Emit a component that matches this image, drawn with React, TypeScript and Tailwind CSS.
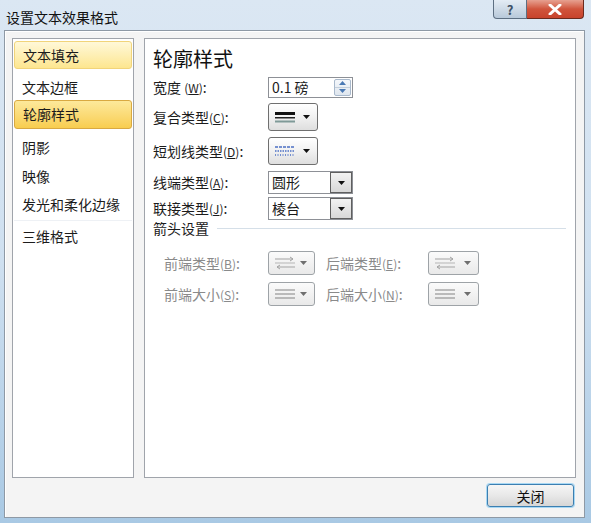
import React from "react";

const font = { fontFamily: '"Noto Sans CJK SC", "Noto Sans", sans-serif' };

function Key({ k }: { k: string }) {
  return (
    <span className="text-[12px]">
      (<span className="underline">{k}</span>)
    </span>
  );
}

function Caret({ dim }: { dim?: boolean }) {
  return (
    <svg width="7" height="4" viewBox="0 0 7 4" className="shrink-0">
      <path d="M0 0 H7 L3.5 4 Z" fill={dim ? "#6f6f6f" : "#111"} />
    </svg>
  );
}

function PicButton({
  children,
  dim,
  w,
}: {
  children: React.ReactNode;
  dim?: boolean;
  w: string;
}) {
  return (
    <div
      className={`${w} flex items-center justify-between pl-[5px] pr-[7px] rounded-[3px] border ${
        dim
          ? "h-[24px] border-[#9ea3a7] bg-gradient-to-b from-[#fbfbfb] to-[#e9e9e9]"
          : "h-[28px] border-[#6f6f6f] bg-gradient-to-b from-[#ffffff] via-[#f1f1f1] to-[#dedede]"
      }`}
    >
      {children}
      <Caret dim={dim} />
    </div>
  );
}

function Combo({ value }: { value: string }) {
  return (
    <div className="w-[85px] h-[23px] flex border border-[#8d9096] bg-white">
      <div className="flex-1 flex items-center pl-[3px] text-[14px] text-[#1a1a1a]">{value}</div>
      <div className="w-[22px] flex items-center justify-center border border-[#5f5f5f] bg-gradient-to-b from-[#f2f2f2] to-[#d8d8d8]">
        <Caret />
      </div>
    </div>
  );
}

const lists = ["文本填充", "文本边框", "轮廓样式", "阴影", "映像", "发光和柔化边缘"];

export default function App() {
  return (
    <div
      className="w-[591px] h-[523px] flex flex-col bg-gradient-to-b from-[#dbe7f3] via-[#cfe0f0] to-[#a9c9e4] text-[#1c1c1c]"
      style={font}
    >
      {/* title bar */}
      <div className="h-[30px] flex justify-between items-start">
        <div className="pl-[6px] pt-[7px] text-[14px] leading-[20px] text-[#111]">设置文本效果格式</div>
        <div className="flex mr-[7px]">
          <div className="w-[34px] h-[19px] flex items-center justify-center rounded-bl-[4px] border border-t-0 border-[#5d6f82] bg-gradient-to-b from-[#e4ecf4] to-[#b8c9da] text-[13px] font-bold text-[#3d5066] leading-none">
            ?
          </div>
          <div className="w-[57px] h-[19px] flex items-center justify-center rounded-br-[4px] border border-t-0 border-l-0 border-[#6b2a1e] bg-gradient-to-b from-[#e6a090] via-[#d0543c] to-[#c8432c]">
            <svg width="14" height="11" viewBox="0 0 14 11">
              <path d="M2 1 L12 10 M12 1 L2 10" stroke="#fff" strokeWidth="3" strokeLinecap="round" />
            </svg>
          </div>
        </div>
      </div>

      {/* client */}
      <div className="ml-[4px] w-[581px] h-[488px] bg-[#f4f4f4] border border-[#8e99a5] shadow-[inset_1px_1px_0_#ffffff] flex flex-col">
        <div className="flex pt-[7px] pl-[7px]">
          {/* left list */}
          <div className="w-[122px] h-[440px] bg-white border border-[#a0a4ab] flex flex-col px-[1px] pt-[2px] text-[14px]">
            <div className="h-[28px] flex items-center pl-[8px] rounded-[3px] border border-[#f1d47a] bg-gradient-to-b from-[#fff8d8] to-[#fde68f]">
              {lists[0]}
            </div>
            <div className="h-[31px] flex items-center pl-[8px] pt-[6px]">{lists[1]}</div>
            <div className="h-[29px] flex items-center pl-[8px] rounded-[3px] border border-[#d9a941] bg-gradient-to-b from-[#fde99a] to-[#f8cd4e]">
              {lists[2]}
            </div>
            <div className="h-[30px] mt-[3px] flex items-center pl-[8px]">{lists[3]}</div>
            <div className="h-[28px] flex items-center pl-[8px]">{lists[4]}</div>
            <div className="h-[28px] flex items-center pl-[8px]">{lists[5]}</div>
            <div className="h-px mt-[2px] bg-[#eef1f5]" />
            <div className="h-[30px] flex items-center pl-[8px]">三维格式</div>
          </div>

          {/* right panel */}
          <div className="ml-[10px] w-[432px] h-[440px] bg-white border border-[#a0a4ab] flex flex-col pl-[8px] text-[14px]">
            <div className="mt-[8px] h-[24px] leading-[24px] text-[20px] text-[#111]">轮廓样式</div>

            <div className="mt-[5px] h-[22px] flex items-center">
              <div className="w-[115px]">
                宽度 <Key k="W" />:
              </div>
              <div className="w-[85px] h-[21px] flex items-center border border-[#8d9096] bg-white">
                <div className="flex-1 pl-[3px] text-[14px] leading-none">0.1 磅</div>
                <div className="w-[17px] h-[17px] mr-[1px] flex flex-col border border-[#a9b9cc] rounded-[2px] bg-gradient-to-b from-[#f4f7fb] to-[#dfe6ee]">
                  <div className="flex-1 flex items-center justify-center border-b border-[#c3cfdc]">
                    <svg width="7" height="4" viewBox="0 0 7 4">
                      <path d="M0 4 H7 L3.5 0 Z" fill="#4a79b4" />
                    </svg>
                  </div>
                  <div className="flex-1 flex items-center justify-center">
                    <svg width="7" height="4" viewBox="0 0 7 4">
                      <path d="M0 0 H7 L3.5 4 Z" fill="#4a79b4" />
                    </svg>
                  </div>
                </div>
              </div>
            </div>

            <div className="mt-[5px] h-[28px] flex items-center">
              <div className="w-[115px]">
                复合类型<Key k="C" />:
              </div>
              <PicButton w="w-[50px]">
                <svg width="22" height="14" viewBox="0 0 22 14">
                  <rect x="1" y="2" width="20" height="3" fill="#111" />
                  <rect x="1" y="7" width="20" height="1.5" fill="#222" />
                  <rect x="1" y="10.5" width="20" height="2" fill="#7f9a98" />
                </svg>
              </PicButton>
            </div>

            <div className="mt-[6px] h-[28px] flex items-center">
              <div className="w-[115px]">
                短划线类型<Key k="D" />:
              </div>
              <PicButton w="w-[50px]">
                <svg width="22" height="14" viewBox="0 0 22 14">
                  <line x1="1" y1="3" x2="21" y2="3" stroke="#4b6fc4" strokeWidth="1.5" strokeDasharray="3 1" />
                  <line x1="1" y1="7" x2="21" y2="7" stroke="#4b6fc4" strokeWidth="1.5" strokeDasharray="1.5 1" />
                  <line x1="1" y1="11" x2="21" y2="11" stroke="#4b6fc4" strokeWidth="1.5" strokeDasharray="1 1.5" />
                </svg>
              </PicButton>
            </div>

            <div className="mt-[6px] h-[23px] flex items-center">
              <div className="w-[115px]">
                线端类型<Key k="A" />:
              </div>
              <Combo value="圆形" />
            </div>

            <div className="mt-[3px] h-[23px] flex items-center">
              <div className="w-[115px]">
                联接类型<Key k="J" />:
              </div>
              <Combo value="棱台" />
            </div>

            <div className="h-[16px] flex items-center pr-[9px]">
              <span className="leading-none">箭头设置</span>
              <div className="flex-1 h-px ml-[8px] bg-[#d5dfe8]" />
            </div>

            {[
              ["前端类型", "B", "后端类型", "E", "arrow"],
              ["前端大小", "S", "后端大小", "N", "size"],
            ].map((r, i) => (
              <div
                key={r[0]}
                className={`${i === 0 ? "mt-[15px]" : "mt-[7px]"} h-[24px] flex items-center pl-[11px] text-[#8a8a8a]`}
              >
                <div className="w-[104px]">
                  {r[0]}
                  <Key k={r[1]} />:
                </div>
                <PicButton w="w-[47px]" dim>
                  {r[4] === "arrow" ? <ArrowIcon /> : <SizeIcon />}
                </PicButton>
                <div className="w-[113px] pl-[11px]">
                  {r[2]}
                  <Key k={r[3]} />:
                </div>
                <PicButton w="w-[51px]" dim>
                  {r[4] === "arrow" ? <ArrowIcon /> : <SizeIcon />}
                </PicButton>
              </div>
            ))}
          </div>
        </div>

        <div className="flex justify-end pr-[10px] pt-[6px]">
          <button className="w-[87px] h-[23px] rounded-[3px] border border-[#3c7fb1] shadow-[0_0_0_1px_#a8d8f4] bg-gradient-to-b from-[#f6f6f6] via-[#e8e8e8] to-[#d6d6d6] text-[14px] leading-none text-[#111]">
            关闭
          </button>
        </div>
      </div>
    </div>
  );
}

function ArrowIcon() {
  return (
    <svg width="22" height="14" viewBox="0 0 22 14">
      <path d="M1 3 H19 M16 1 L19 3 L16 5" stroke="#a3a3a3" strokeWidth="1" fill="none" />
      <line x1="1" y1="7" x2="21" y2="7" stroke="#b5b5b5" strokeWidth="1" />
      <path d="M21 11 H3 M6 9 L3 11 L6 13" stroke="#a3a3a3" strokeWidth="1" fill="none" />
    </svg>
  );
}

function SizeIcon() {
  return (
    <svg width="22" height="14" viewBox="0 0 22 14">
      <line x1="1" y1="3" x2="21" y2="3" stroke="#9c9c9c" strokeWidth="1.3" />
      <line x1="1" y1="7" x2="21" y2="7" stroke="#9c9c9c" strokeWidth="1.3" />
      <line x1="1" y1="11" x2="21" y2="11" stroke="#9c9c9c" strokeWidth="1.3" />
    </svg>
  );
}
